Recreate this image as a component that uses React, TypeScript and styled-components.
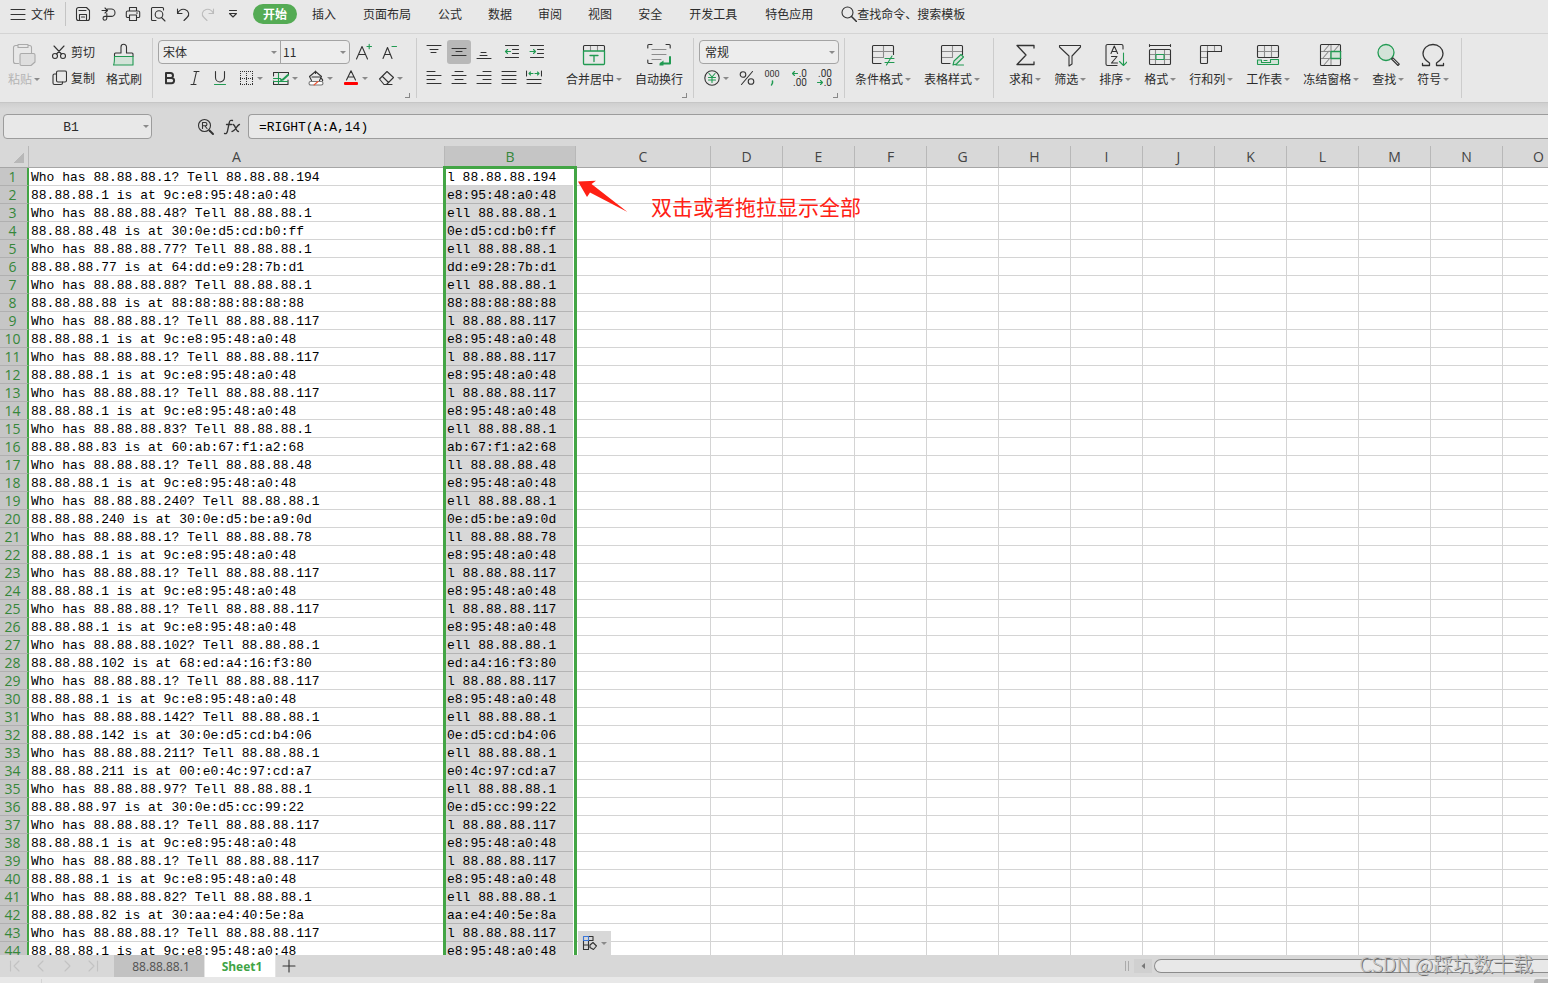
import React from "react";
import styled, { createGlobalStyle, css } from "styled-components";

const ink = "#333333";
const green = "#219a52";
const ui = `"Noto Sans CJK SC", "Noto Sans", sans-serif`;
const latin = `"Open Sans", "Noto Sans", sans-serif`;
const mono = `"Liberation Mono", "Noto Sans CJK SC", monospace`;

const Global = createGlobalStyle`
  * { box-sizing: border-box; }
  body { margin: 0; overflow: hidden; background: #e8e8e8; color: #2c2c2c; font: 12px/18px ${ui}; }
  button, select, input { font: inherit; color: inherit; margin: 0; padding: 0; border: 0; background: none; }
`;

const Page = styled.div`
  display: flex;
  flex-direction: column;
  height: 100vh;
`;

/* ---------- menu bar ---------- */
const MenuBar = styled.nav`
  display: flex;
  align-items: center;
  flex: none;
  height: 34px;
  padding: 0 0 5px 10px;
  border-bottom: 1px solid #d4d4d4;
`;
const FileButton = styled.button`
  display: flex;
  align-items: center;
  gap: 5px;
  height: 24px;
  padding-right: 10px;
  border-right: 1px solid #c4c4c4;
`;
const QuickBar = styled.div`
  display: flex;
  gap: 1px;
  padding: 0 8px 0 5px;
`;
const SquareButton = styled.button<{ $active?: boolean }>`
  display: flex;
  align-items: center;
  justify-content: center;
  width: 24px;
  height: 24px;
  border-radius: 3px;
  ${(p) => p.$active && css`background: #b8b8b8;`}
`;
const Tab = styled.button<{ $active?: boolean; $long?: boolean }>`
  height: 20px;
  padding: 0 ${(p) => (p.$long ? 14 : 13)}px;
  border-radius: 10px;
  white-space: nowrap;
  ${(p) =>
    p.$active &&
    css`
      margin-right: 2px;
      padding: 0 10px;
      background: #54ab54;
      color: #fff;
      font-weight: 700;
    `}
`;
const TabList = styled.div`
  display: flex;
`;
const SearchBox = styled.label`
  display: flex;
  align-items: center;
  flex: 1;
  margin-left: 14px;
  input { flex: 1; min-width: 0; outline: none; }
  input::placeholder { color: #2c2c2c; opacity: 1; }
`;

/* ---------- ribbon ---------- */
const Ribbon = styled.div`
  display: flex;
  flex: none;
  height: 68px;
  padding: 4px 0;
`;
const Group = styled.section<{ $left: number; $right: number; $gap: number }>`
  position: relative;
  display: flex;
  flex: none;
  gap: ${(p) => p.$gap}px;
  padding: 2px ${(p) => p.$right}px 0 ${(p) => p.$left}px;
  border-right: 1px solid #cccccc;
`;
const Corner = styled.button`
  position: absolute;
  right: 6px;
  bottom: 0;
  width: 5px;
  height: 5px;
  border: solid #888;
  border-width: 0 1px 1px 0;
`;
const Stack = styled.div<{ $after?: number }>`
  display: flex;
  flex-direction: column;
  gap: 2px;
  padding-right: ${(p) => p.$after ?? 0}px;
`;
const Row = styled.div<{ $gap?: number }>`
  display: flex;
  align-items: center;
  height: 24px;
  gap: ${(p) => p.$gap ?? 1}px;
`;
const BigButton = styled.button<{ $muted?: boolean }>`
  display: flex;
  flex-direction: column;
  align-items: center;
  gap: 3px;
  padding-top: 3px;
  color: ${(p) => (p.$muted ? "#b4b4b4" : "inherit")};
`;
const Label = styled.span`
  display: flex;
  align-items: center;
  gap: 2px;
  white-space: nowrap;
`;
const LineButton = styled.button`
  display: flex;
  align-items: center;
  gap: 4px;
  height: 24px;
`;
const DropButton = styled.button`
  display: flex;
  align-items: center;
  gap: 3px;
  height: 24px;
  padding: 0 5px;
`;
const Caret = styled.i`
  flex: none;
  width: 0;
  height: 0;
  border: solid transparent;
  border-width: 3px 3px 0;
  border-top-color: #8a8a8a;
`;
const Combo = styled.div<{ $width: number }>`
  display: flex;
  width: ${(p) => p.$width}px;
  height: 24px;
  border: 1px solid #a4a4a4;
  border-radius: 4px;
  background: #ededed;
`;
const Pick = styled.label<{ $width?: number; $inset: number }>`
  display: flex;
  align-items: center;
  ${(p) => (p.$width ? css`width: ${p.$width}px;` : css`flex: 1;`)}
  padding: 0 3px 0 ${(p) => p.$inset}px;
  & + & { border-left: 1px solid #a4a4a4; }
  select { appearance: none; flex: 1; min-width: 0; outline: none; }
`;

/* ---------- formula bar ---------- */
const FormulaBar = styled.div`
  display: flex;
  align-items: center;
  flex: none;
  height: 44px;
  padding: 4px 0 0 3px;
  border-top: 1px solid #c6c6c6;
  background: linear-gradient(#cfcfcf, #d8d8d8 6px);
`;
const NameBox = styled.label`
  display: flex;
  align-items: center;
  width: 149px;
  height: 25px;
  padding-right: 2px;
  border: 1px solid #9c9c9c;
  border-radius: 4px;
  background: #e8e8e8;
  input {
    flex: 1;
    min-width: 0;
    padding: 2px 5px 0 0;
    text-align: center;
    font: 13px/18px ${mono};
    outline: none;
  }
`;
const FormulaTools = styled.div`
  display: flex;
  gap: 2px;
  padding: 0 4px 0 42px;
`;
const FormulaInput = styled.input`
  && {
    flex: 1;
    min-width: 0;
    height: 25px;
    padding: 2px 0 0 10px;
    border: solid #9c9c9c;
    border-width: 1px 0 1px 1px;
    border-radius: 4px 0 0 4px;
    background: #e8e8e8;
    color: #000;
    font: 13px/18px ${mono};
    outline: none;
  }
`;

/* ---------- sheet ---------- */
const Sheet = styled.main`
  position: relative;
  flex: 1;
  min-height: 0;
  overflow: hidden;
  background: #fff;
`;
const Grid = styled.table`
  table-layout: fixed;
  width: 1575px;
  border-collapse: separate;
  border-spacing: 0;
`;
const ColHead = styled.th<{ $on?: boolean }>`
  height: 22px;
  padding: 0 0 1px;
  border-right: 1px solid #b8b8b8;
  border-bottom: 1px solid #a6a6a6;
  background: ${(p) => (p.$on ? "#c5c5c5" : "#d8d8d8")};
  color: ${(p) => (p.$on ? "#36873a" : "#444")};
  font: 14px/19px ${latin};
`;
const SelectAll = styled.th`
  height: 22px;
  padding: 0;
  border-right: 1px solid #b8b8b8;
  border-bottom: 1px solid #a6a6a6;
  background: linear-gradient(135deg, #d8d8d8 50%, #b8b8b8 50%) 13px 6px / 11px 11px no-repeat #d8d8d8;
`;
const RowHead = styled.th`
  height: 18px;
  padding: 0 2px 0 0;
  border-right: 2px solid #43a545;
  border-bottom: 1px solid #b0b0b0;
  background: #c6c6c6;
  color: #36873a;
  font: 14px/17px ${latin};
`;
const Cell = styled.td<{ $fill?: boolean }>`
  height: 18px;
  padding: 3px 0 0 2px;
  border-right: 1px solid #d4d4d4;
  border-bottom: 1px solid ${(p) => (p.$fill ? "#b4b4b4" : "#d4d4d4")};
  ${(p) => p.$fill && css`background: #d8d8d8;`}
  color: #000;
  font: 13px/14px ${mono};
  white-space: pre;
`;
const Selection = styled.div`
  position: absolute;
  top: 20px;
  bottom: 0;
  left: 443px;
  width: 134px;
  border: 3px solid #43a545;
  border-bottom: 0;
  box-shadow: inset -1px 1px 0 #fff;
  pointer-events: none;
`;
const Callout = styled.div`
  position: absolute;
  top: 34px;
  left: 577px;
  display: flex;
  gap: 23px;
  color: #ff2014;
  font-size: 21px;
  line-height: 52px;
  white-space: nowrap;
`;
const FillOptions = styled.button`
  && {
    position: absolute;
    left: 578px;
    bottom: 0;
    display: flex;
    align-items: center;
    gap: 3px;
    width: 33px;
    height: 24px;
    padding-left: 4px;
    background: #d8d8d8;
  }
`;

/* ---------- bottom ---------- */
const SheetBar = styled.footer`
  position: relative;
  display: flex;
  flex: none;
  height: 22px;
  background: #d8d8d8;
`;
const SheetNav = styled.div`
  display: flex;
  align-items: center;
  gap: 10px;
  width: 114px;
  padding-left: 7px;
`;
const NavButton = styled.button`
  display: flex;
  width: 16px;
`;
const SheetTab = styled.button<{ $active?: boolean }>`
  && {
    width: ${(p) => (p.$active ? 71 : 91)}px;
    padding: 2px 0 0 4px;
    border-right: 1px solid #e4e4e4;
    background: ${(p) => (p.$active ? "#fff" : "#c2c2c2")};
    color: ${(p) => (p.$active ? "#3fa446" : "#505050")};
    font: ${(p) => (p.$active ? 700 : 400)} 12px/18px ${latin};
  }
`;
const AddSheet = styled.button`
  && {
    display: flex;
    align-items: center;
    width: 26px;
    padding-left: 6px;
  }
`;
const Scroller = styled.div`
  display: flex;
  align-items: center;
  width: 423px;
  margin-left: auto;
`;
const Splitter = styled.span`
  width: 4px;
  height: 10px;
  margin-right: 5px;
  border: solid #aaa;
  border-width: 0 1px;
`;
const ScrollButton = styled.button`
  && {
    display: flex;
    align-items: center;
    justify-content: center;
    width: 18px;
    height: 14px;
    margin-right: 2px;
    background: #d0d0d0;
  }
`;
const Thumb = styled.div`
  flex: 1;
  height: 14px;
  border: 1px solid #8c8c8c;
  border-right: 0;
  border-radius: 7px 0 0 7px;
  background: #e8e8e8;
`;
const Watermark = styled.span`
  position: absolute;
  right: 15px;
  bottom: 1px;
  color: #c4c4c4;
  font-size: 20px;
  font-weight: 300;
  line-height: 24px;
  white-space: nowrap;
  text-shadow: 1px 1px 0 #6e6e6e;
`;
const StatusBar = styled.div`
  display: flex;
  justify-content: space-between;
  flex: none;
  height: 6px;
  padding: 2px 0 0 41px;
  background: #e8e8e8;
`;
const StatusMark = styled.span<{ $wide?: boolean }>`
  width: ${(p) => (p.$wide ? 14 : 1)}px;
  background: ${(p) => (p.$wide ? "#b4b4b4" : "#d4d4d4")};
  border-radius: ${(p) => (p.$wide ? "3px 0 0 0" : "0")};
`;

/* ---------- icons ---------- */
type IconProps = { size?: number; w?: number; color?: string; children: React.ReactNode };
const Icon = ({ size = 16, w, color = ink, children }: IconProps) => (
  <svg
    width={w ?? size}
    height={size}
    viewBox={`0 0 ${w ?? size} ${size}`}
    fill="none"
    stroke={color}
    strokeWidth="1.1"
    strokeLinecap="round"
    strokeLinejoin="round"
    aria-hidden="true"
  >
    {children}
  </svg>
);

const quick: [string, React.ReactNode][] = [
  ["保存", <Icon key="i"><path d="M1.5 3.5a2 2 0 0 1 2-2h8l3 3v8a2 2 0 0 1-2 2h-9a2 2 0 0 1-2-2zM4.5 14.500v-6h7v6M4 4.500h7M6.500 11h3" /></Icon>],
  ["输出为PDF", <Icon key="i"><path d="M2 4.500h5M5 2l2.500 2.500L5 7M7.500 3h3.800a3.700 3.700 0 0 1 0 7.400H4.800a1.900 1.900 0 1 0 2 1.900V7.500" /></Icon>],
  ["打印", <Icon key="i"><path d="M4.500 5V1.500h7V5M4.500 11.500h-2a1.200 1.200 0 0 1-1.200-1.200V6.500A1.500 1.500 0 0 1 2.800 5h10.400a1.500 1.500 0 0 1 1.500 1.500v3.800a1.200 1.200 0 0 1-1.200 1.200h-2M4.500 9h7v5.500h-7zM11.500 7h1" /></Icon>],
  ["打印预览", <Icon key="i"><path d="M6 14.500H2.500a1 1 0 0 1-1-1v-11a1 1 0 0 1 1-1h10a1 1 0 0 1 1 1V4M11.500 11.500l3.500 3.500" /><circle cx="9" cy="8.500" r="3.800" /></Icon>],
  ["撤消", <Icon key="i"><path d="M2.500 3v4.500H7M2.500 7.500C4 4.500 7 2.800 10 3.500c4 1.200 5 5.500 2 8L9 14.500" /></Icon>],
  ["恢复", <Icon key="i" color="#bcbcbc"><path d="M13.500 3v4.500H9M13.500 7.500C12 4.500 9 2.800 6 3.500c-4 1.200-5 5.500-2 8L7 14.500" /></Icon>],
  ["自定义", <Icon key="i"><path d="M4.500 4.500h7M4.500 7.500h7L8 11z" /></Icon>],
];

const tabs = ["开始", "插入", "页面布局", "公式", "数据", "审阅", "视图", "安全", "开发工具", "特色应用"];

const lines = (rows: [number, number, number][]) => (
  <Icon>
    <path d={rows.map(([x, y, n]) => `M${x} ${y}.500h${n}`).join("")} />
  </Icon>
);
const indent = (left: boolean) => (
  <Icon>
    <path d="M1.500 1.500h13M8.500 5.500h6M8.500 9.500h6M1.500 13.500h13" />
    <path stroke={green} d={left ? "M1.500 7.500h5M3.500 5.500l-2 2 2 2" : "M1 7.500h5M4.500 5.500l2 2-2 2"} />
  </Icon>
);
const grid = (
  <>
    <path stroke="#8c8c8c" d="M1.500 8.500h21M1.500 14.500h11M12.500 2.500v12" />
    <path d="M10 20.500H2.500a1 1 0 0 1-1-1v-16a1 1 0 0 1 1-1h19a1 1 0 0 1 1 1v8" />
  </>
);

type Tool = { label: string; caret?: boolean; icon: React.ReactNode };
const styleTools: Tool[] = [
  { label: "条件格式", caret: true, icon: <Icon size={24}>{grid}<path stroke={green} d="M14 15.500h9M14 19.500h9M21 13l-5.500 9" /></Icon> },
  { label: "表格样式", caret: true, icon: <Icon size={24}>{grid}<path stroke={green} fill="#d3e3d8" d="M13 22l1-4 7-6.500 2.500 2.500-7 7zM16 22h7.500" /></Icon> },
];
const editTools: Tool[] = [
  { label: "求和", caret: true, icon: <Icon size={24}><path strokeWidth="1.300" d="M21 5V2.500H4l9 9.500-9 9.500h17V19" /></Icon> },
  { label: "筛选", caret: true, icon: <Icon size={24}><path d="M1.500 2.500h21v1.500l-8.500 9v8l-3 2v-10L1.500 4z" /></Icon> },
  {
    label: "排序",
    caret: true,
    icon: (
      <Icon size={24}>
        <path d="M11 22.500H4.500a1.500 1.500 0 0 1-1.500-1.500V3a1.500 1.500 0 0 1 1.500-1.500h14A1.500 1.500 0 0 1 20 3v3M11 22.500h3" />
        <path d="M8 10.500l3.300-7.500 3.300 7.500M9 8.500h4.600M8.500 13.500h5.500l-5.500 6.500h6" />
        <path stroke={green} d="M20.500 10v12M16.500 18.500l4 4 4-4" />
      </Icon>
    ),
  },
  {
    label: "格式",
    caret: true,
    icon: (
      <Icon size={24}>
        <path d="M1.500 1.500v2M22.500 1.500v2M1.500 2.500h21" />
        <path stroke="#8c8c8c" d="M1.500 11.500h21M1.500 16.500h21M7.500 6.500v15M16.500 6.500v15" />
        <rect x="1.500" y="6.500" width="21" height="15" rx="1" />
        <rect x="8" y="11.500" width="8" height="5" fill="#e8e8e8" stroke={green} />
      </Icon>
    ),
  },
  { label: "行和列", caret: true, icon: <Icon size={24}><path stroke="#8c8c8c" d="M8.500 2.500v6h-7M15.500 2.500v6M1.500 14.500h7" /><path d="M2.500 2.500h19a1 1 0 0 1 1 1v5h-14v11a1 1 0 0 1-1 1h-5a1 1 0 0 1-1-1v-16a1 1 0 0 1 1-1z" /></Icon> },
  {
    label: "工作表",
    caret: true,
    icon: (
      <Icon size={24}>
        <path stroke="#8c8c8c" d="M1.500 8.500h21M8.500 2.500v12M15.500 2.500v12" />
        <rect x="1.500" y="2.500" width="21" height="12" rx="1" />
        <path stroke={green} fill="#d3e3d8" d="M1.500 17v4a.5.5 0 0 0 .5.500h20a.5.5 0 0 0 .5-.500v-4.500h-8v3h-9v-2.500zM8 17.500h3" />
      </Icon>
    ),
  },
  {
    label: "冻结窗格",
    caret: true,
    icon: (
      <Icon size={24}>
        <path stroke="#8c8c8c" d="M2 8.500h20M2 15.500h20M12 2v20M5 8l5-6M15 8l5-6M4 15l6-7M5 22l6-7" />
        <rect x="1.500" y="1.500" width="20" height="21" rx="1" />
        <rect x="12" y="8.500" width="9.500" height="7" fill="#d3e3d8" stroke={green} strokeWidth="1.300" />
      </Icon>
    ),
  },
  { label: "查找", caret: true, icon: <Icon size={24}><circle cx="10" cy="9.500" r="8" fill="#d3e3d8" stroke={green} strokeWidth="1.300" /><path d="M15.500 16l6.500 6.500 1.300-1.300L17 14.800z" /></Icon> },
  { label: "符号", caret: true, icon: <Icon size={24}><path strokeWidth="1.300" d="M1.500 20.500v2h7V20C4.500 17.500 2 14.500 2 10.500a10 9 0 0 1 20 0c0 4-2.500 7-6.500 9.500v2.500h7v-2" /></Icon> },
];

const Tools = ({ items }: { items: Tool[] }) => (
  <>
    {items.map((t) => (
      <BigButton key={t.label}>
        {t.icon}
        <Label>{t.label}{t.caret && <Caret />}</Label>
      </BigButton>
    ))}
  </>
);

const Decimals = ({ top, bottom, more }: { top: string; bottom: string; more: boolean }) => (
  <Icon w={18} size={18}>
    <g fill={ink} stroke="none" fontFamily="Roboto, sans-serif" fontSize="10" textAnchor="end">
      <text x="16" y="8">{top}</text>
      <text x="16" y="17">{bottom}</text>
    </g>
    <path stroke={green} d={more ? "M1.500 4.500h5M3.500 2.500l-2 2 2 2" : "M1.500 13.500h5M4.500 11.500l2 2-2 2"} />
  </Icon>
);

const cells = [
  "Who has 88.88.88.1? Tell 88.88.88.194", "88.88.88.1 is at 9c:e8:95:48:a0:48",
  "Who has 88.88.88.48? Tell 88.88.88.1", "88.88.88.48 is at 30:0e:d5:cd:b0:ff",
  "Who has 88.88.88.77? Tell 88.88.88.1", "88.88.88.77 is at 64:dd:e9:28:7b:d1",
  "Who has 88.88.88.88? Tell 88.88.88.1", "88.88.88.88 is at 88:88:88:88:88:88",
  "Who has 88.88.88.1? Tell 88.88.88.117", "88.88.88.1 is at 9c:e8:95:48:a0:48",
  "Who has 88.88.88.1? Tell 88.88.88.117", "88.88.88.1 is at 9c:e8:95:48:a0:48",
  "Who has 88.88.88.1? Tell 88.88.88.117", "88.88.88.1 is at 9c:e8:95:48:a0:48",
  "Who has 88.88.88.83? Tell 88.88.88.1", "88.88.88.83 is at 60:ab:67:f1:a2:68",
  "Who has 88.88.88.1? Tell 88.88.88.48", "88.88.88.1 is at 9c:e8:95:48:a0:48",
  "Who has 88.88.88.240? Tell 88.88.88.1", "88.88.88.240 is at 30:0e:d5:be:a9:0d",
  "Who has 88.88.88.1? Tell 88.88.88.78", "88.88.88.1 is at 9c:e8:95:48:a0:48",
  "Who has 88.88.88.1? Tell 88.88.88.117", "88.88.88.1 is at 9c:e8:95:48:a0:48",
  "Who has 88.88.88.1? Tell 88.88.88.117", "88.88.88.1 is at 9c:e8:95:48:a0:48",
  "Who has 88.88.88.102? Tell 88.88.88.1", "88.88.88.102 is at 68:ed:a4:16:f3:80",
  "Who has 88.88.88.1? Tell 88.88.88.117", "88.88.88.1 is at 9c:e8:95:48:a0:48",
  "Who has 88.88.88.142? Tell 88.88.88.1", "88.88.88.142 is at 30:0e:d5:cd:b4:06",
  "Who has 88.88.88.211? Tell 88.88.88.1", "88.88.88.211 is at 00:e0:4c:97:cd:a7",
  "Who has 88.88.88.97? Tell 88.88.88.1", "88.88.88.97 is at 30:0e:d5:cc:99:22",
  "Who has 88.88.88.1? Tell 88.88.88.117", "88.88.88.1 is at 9c:e8:95:48:a0:48",
  "Who has 88.88.88.1? Tell 88.88.88.117", "88.88.88.1 is at 9c:e8:95:48:a0:48",
  "Who has 88.88.88.82? Tell 88.88.88.1", "88.88.88.82 is at 30:aa:e4:40:5e:8a",
  "Who has 88.88.88.1? Tell 88.88.88.117", "88.88.88.1 is at 9c:e8:95:48:a0:48",
];
const columns = "ABCDEFGHIJKLMNO".split("");
const widths = [29, 416, 131, 135, ...Array(12).fill(72)];

export default function App() {
  return (
    <Page>
      <Global />
      <MenuBar>
        <FileButton>
          <Icon><path d="M1 3.500h14M1 8.500h14M1 13.500h14" /></Icon>文件
        </FileButton>
        <QuickBar>
          {quick.map(([name, icon]) => (
            <SquareButton key={name} aria-label={name}>{icon}</SquareButton>
          ))}
        </QuickBar>
        <TabList>
          {tabs.map((t, i) => <Tab key={t} $active={i === 0} $long={t.length > 2}>{t}</Tab>)}
        </TabList>
        <SearchBox>
          <Icon><circle cx="6.500" cy="6.500" r="5.500" /><path strokeWidth="1.500" d="M10.500 10.500l5 5" /></Icon>
          <input placeholder="查找命令、搜索模板" aria-label="查找命令、搜索模板" />
        </SearchBox>
      </MenuBar>

      <Ribbon>
        <Group $left={8} $right={10} $gap={11}>
          <BigButton $muted>
            <Icon size={24} color="#aaa">
              <path d="M6.500 20.500h-3a2 2 0 0 1-2-2v-14a2 2 0 0 1 2-2H6M16 2.500h1.500a2 2 0 0 1 2 2V10M6 4.500v-3h10v3z" />
              <path fill="#dedede" d="M9.500 10.500h12a1.500 1.500 0 0 1 1.500 1.500v7l-4 3.500H9.500A1.500 1.500 0 0 1 8 21v-9a1.500 1.500 0 0 1 1.500-1.500z" />
            </Icon>
            <Label>粘贴<Caret /></Label>
          </BigButton>
          <Stack>
            <LineButton>
              <Icon><circle cx="4" cy="12" r="2.500" /><circle cx="12" cy="12" r="2.500" /><path d="M5.500 10L13 2M10.500 10L3 2" /></Icon>剪切
            </LineButton>
            <LineButton>
              <Icon><rect x="5.500" y="1" width="10" height="11" rx="1.500" /><path d="M5.500 4h-2A1.500 1.500 0 0 0 2 5.500v7.500A1.500 1.500 0 0 0 3.500 14.500h6.500a1.500 1.500 0 0 0 1.500-1.500v-1" /></Icon>复制
            </LineButton>
          </Stack>
          <BigButton>
            <Icon size={24}>
              <path fill="#d3e3d8" stroke="none" d="M3 13h18v9H3z" />
              <path d="M2.500 13.500V11a1 1 0 0 1 1-1H9V4a2.500 2.500 0 0 1 5.500 0v6h5.500a1 1 0 0 1 1 1v2.500" />
              <path stroke={green} d="M2.500 13.500h18.500v8.500H1.500c1-1.500 1-3 1-8.500z" />
            </Icon>
            <Label>格式刷</Label>
          </BigButton>
        </Group>

        <Group $left={5} $right={8} $gap={0}>
          <Stack>
            <Row $gap={2}>
              <Combo $width={192}>
                <Pick $width={121} $inset={4}><select aria-label="字体"><option>宋体</option></select><Caret /></Pick>
                <Pick $inset={2}><select aria-label="字号"><option>11</option></select><Caret /></Pick>
              </Combo>
              <SquareButton aria-label="增大字号">
                <Icon size={18}><path d="M1.500 16L7 3.500 12.500 16M3.500 11.500h7" /><path stroke={green} d="M12 3.500h4.500M14.200 1.200v4.600" /></Icon>
              </SquareButton>
              <SquareButton aria-label="减小字号">
                <Icon size={18}><path d="M2 15.500L6.500 4.500 11 15.500M3.500 11.500h6" /><path stroke={green} d="M11 3.500h4.500" /></Icon>
              </SquareButton>
            </Row>
            <Row>
              <SquareButton aria-label="加粗"><Icon><path strokeWidth="2" d="M4 3h4.500a2.500 2.500 0 0 1 0 5H4zM4 8h5.500a2.600 2.600 0 0 1 0 5.200H4z" /></Icon></SquareButton>
              <SquareButton aria-label="倾斜"><Icon><path d="M7 1.500h5M4 14.500h5M9.500 1.500l-3 13" /></Icon></SquareButton>
              <SquareButton aria-label="下划线"><Icon><path d="M3.500 1.500v6a4.500 4.500 0 0 0 9 0v-6" /><path stroke={green} d="M2.500 14.500h11" /></Icon></SquareButton>
              <Row $gap={0}>
                <DropButton aria-label="边框">
                  <Icon><path strokeWidth="1" strokeLinecap="butt" strokeDasharray="1 1" d="M2 1.500h13M2 8.500h13M2 14.500h13M2.500 1v14M8.500 1v14M14.500 1v14" /></Icon>
                  <Caret />
                </DropButton>
                <DropButton aria-label="绘制边框">
                  <Icon>
                    <path d="M15.500 4.500v-2h-15V6M.5 11v3.500h14.500V10" />
                    <path stroke={green} d="M.5 8.500h7M.5 11.500h14M5.500 3v11" />
                    <path stroke={green} strokeWidth="2" d="M15 5l-5 4.500-2 .5" />
                  </Icon>
                  <Caret />
                </DropButton>
                <DropButton aria-label="填充颜色">
                  <Icon>
                    <path d="M3.500 10.500L1.500 6.500l6-5 6 5-2 4M4 7h8M7.500 3.500V1M12.500 8c2 1 2.500 2 2 3" />
                    <rect x="1" y="11.500" width="14" height="3.500" rx="1.700" fill="#fff" stroke="#777" />
                    <path stroke="#e53" d="M6 15l4-3.500" />
                  </Icon>
                  <Caret />
                </DropButton>
                <DropButton aria-label="字体颜色"><Icon><path d="M3.500 10L8 .8 12.500 10M5 7h6" /><rect x="1" y="12" width="14" height="3" rx="1" fill="#f00" stroke="none" /></Icon><Caret /></DropButton>
                <DropButton aria-label="清除"><Icon><path d="M1.500 9L9 1.500 15.500 7.500 8.500 14.500H6zM4.500 6.500l6 6M6 14.500h8" /></Icon><Caret /></DropButton>
              </Row>
            </Row>
          </Stack>
          <Corner aria-label="字体设置" />
        </Group>

        <Group $left={5} $right={10} $gap={13}>
          <Stack $after={4}>
            <Row $gap={4}>
              <Row>
                <SquareButton aria-label="顶端对齐">{lines([[1, 1, 14], [4, 5, 8], [5, 8, 5]])}</SquareButton>
                <SquareButton aria-label="垂直居中" $active>{lines([[1, 4, 14], [5, 7, 6], [1, 11, 14]])}</SquareButton>
                <SquareButton aria-label="底端对齐">{lines([[5, 8, 5], [4, 11, 7], [1, 14, 14]])}</SquareButton>
              </Row>
              <Row>
                <SquareButton aria-label="减少缩进">{indent(true)}</SquareButton>
                <SquareButton aria-label="增加缩进">{indent(false)}</SquareButton>
              </Row>
            </Row>
            <Row>
              <SquareButton aria-label="左对齐">{lines([[1, 1, 8], [1, 5, 14], [1, 9, 8], [1, 13, 14]])}</SquareButton>
              <SquareButton aria-label="水平居中">{lines([[4, 1, 8], [1, 5, 14], [4, 9, 8], [1, 13, 14]])}</SquareButton>
              <SquareButton aria-label="右对齐">{lines([[7, 1, 8], [1, 5, 14], [7, 9, 8], [1, 13, 14]])}</SquareButton>
              <SquareButton aria-label="两端对齐">{lines([[1, 1, 14], [1, 5, 14], [1, 9, 14], [1, 13, 14]])}</SquareButton>
              <SquareButton aria-label="分散对齐">
                <Icon><path d="M.5 1v5M15.500 1v5M1 9.500h14M1 13.500h14" /><path stroke={green} d="M3 3.500h4M4.500 2L3 3.500 4.500 5M9 3.500h4M11.500 2L13 3.500 11.500 5" /></Icon>
              </SquareButton>
            </Row>
          </Stack>
          <Tools
            items={[
              {
                label: "合并居中",
                caret: true,
                icon: (
                  <Icon size={24}>
                    <path stroke="#8c8c8c" d="M8.500 2.500v5M15.500 2.500v5" />
                    <path d="M1.500 7.500v-4a1 1 0 0 1 1-1h19a1 1 0 0 1 1 1v4" />
                    <path stroke={green} strokeWidth="1.300" d="M1.500 8h21v12.500a1 1 0 0 1-1 1h-19a1 1 0 0 1-1-1zM8 12.500h8M12 12.500v6" />
                  </Icon>
                ),
              },
              {
                label: "自动换行",
                icon: (
                  <Icon size={24}>
                    <path d="M.8 5V2.500a1 1 0 0 1 1-1H5M19 1.500h3.200a1 1 0 0 1 1 1V5M.8 17v2.500a1 1 0 0 0 1 1H5" />
                    <path stroke="#8c8c8c" d="M5 6.500h14M5 11.500h14M5 16.500h9" />
                    <path stroke={green} strokeWidth="2" d="M23 14v6.500h-9" />
                    <path fill={green} stroke="none" d="M12.500 20.500l4-3v5h-4z" />
                  </Icon>
                ),
              },
            ]}
          />
          <Corner aria-label="对齐设置" />
        </Group>

        <Group $left={5} $right={5} $gap={0}>
          <Stack>
            <Combo $width={140}>
              <Pick $inset={5}><select aria-label="数字格式"><option>常规</option></select><Caret /></Pick>
            </Combo>
            <Row $gap={4}>
              <Row>
                <DropButton aria-label="货币"><Icon><circle cx="8" cy="8" r="7.200" /><path stroke={green} d="M5 3.500l3 3.500 3-3.500M8 7v5.500M4.500 7.500h7M4.500 10h7" /></Icon><Caret /></DropButton>
                <SquareButton aria-label="百分比"><Icon><circle cx="4" cy="4.500" r="2.800" /><circle cx="12" cy="11.500" r="2.800" /><path d="M13.500 1.500l-11 13" /></Icon></SquareButton>
                <SquareButton aria-label="千位分隔">
                  <Icon w={18} size={18}>
                    <text x="9" y="8" fill={ink} stroke="none" fontFamily="Roboto, sans-serif" fontSize="9" textAnchor="middle">000</text>
                    <path stroke={green} strokeWidth="1.500" d="M9.500 12v2l-1 2" />
                  </Icon>
                </SquareButton>
              </Row>
              <Row>
                <SquareButton aria-label="增加小数位"><Decimals top=".0" bottom=".00" more /></SquareButton>
                <SquareButton aria-label="减少小数位"><Decimals top=".00" bottom=".0" more={false} /></SquareButton>
              </Row>
            </Row>
          </Stack>
          <Corner aria-label="数字设置" />
        </Group>

        <Group $left={10} $right={13} $gap={13}><Tools items={styleTools} /></Group>
        <Group $left={15} $right={12} $gap={13}><Tools items={editTools} /></Group>
      </Ribbon>

      <FormulaBar>
        <NameBox><input aria-label="名称框" defaultValue="B1" /><Caret /></NameBox>
        <FormulaTools>
          <SquareButton aria-label="浏览公式">
            <Icon size={18}><circle cx="7.500" cy="7.500" r="6" /><path d="M5.500 10.500v-6h2.800a1.600 1.600 0 0 1 0 3.300H5.500M8 8l2 2.500" /><path strokeWidth="2" d="M12.500 12.500l3.500 3.500" /></Icon>
          </SquareButton>
          <SquareButton aria-label="插入函数">
            <Icon size={18}><path strokeWidth="1.300" d="M1.500 15.500c1.800.5 2.500-.5 3-2.500l1.800-8.500C6.700 2.500 7.700 2 9.500 2.500M3.500 6.500h5M10 6.500c2.500 0 2.500 7 5.500 7M16.500 6.500c-2 0-4.500 7-7.500 7" /></Icon>
          </SquareButton>
        </FormulaTools>
        <FormulaInput aria-label="公式" defaultValue="=RIGHT(A:A,14)" />
      </FormulaBar>

      <Sheet>
        <Grid>
          <colgroup>{widths.map((w, i) => <col key={i} width={w} />)}</colgroup>
          <thead>
            <tr>
              <SelectAll aria-label="全选" />
              {columns.map((c) => <ColHead key={c} $on={c === "B"}>{c}</ColHead>)}
            </tr>
          </thead>
          <tbody>
            {cells.map((text, r) => (
              <tr key={r}>
                <RowHead>{r + 1}</RowHead>
                {columns.map((c) => (
                  <Cell key={c} $fill={c === "B" && r > 0}>
                    {c === "A" ? text : c === "B" ? text.slice(-14) : null}
                  </Cell>
                ))}
              </tr>
            ))}
          </tbody>
        </Grid>
        <Selection />
        <Callout>
          <svg width="51" height="34" viewBox="0 0 51 34" fill="#ff2014" aria-hidden="true">
            <path d="M1 1.500L19 .8 14.500 4 50.500 32 13 12.500 10 17z" />
          </svg>
          双击或者拖拉显示全部
        </Callout>
        <FillOptions aria-label="自动填充选项">
          <Icon>
            <path d="M1.500 5.500v9h5v-9M1.500 10h5M6.500 5.500h4.500v-4H6.500M8 10l3-2.500 3.500 3.500-3 3.500L8 12.500z" />
            <path stroke="#3b76d8" d="M1.500 1.500h5v4h-5z" />
          </Icon>
          <Caret />
        </FillOptions>
      </Sheet>

      <SheetBar>
        <SheetNav>
          {["M3.500 3v10M12 3L7 8l5 5", "M10 3L5 8l5 5", "M6 3l5 5-5 5", "M4 3l5 5-5 5M12.500 3v10"].map((d, i) => (
            <NavButton key={d} aria-label={["首个", "上一个", "下一个", "末个"][i]}>
              <Icon color="#c2c2c2"><path d={d} /></Icon>
            </NavButton>
          ))}
        </SheetNav>
        <SheetTab>88.88.88.1</SheetTab>
        <SheetTab $active>Sheet1</SheetTab>
        <AddSheet aria-label="新建工作表"><Icon size={14}><path d="M7 1v12M1 7h12" /></Icon></AddSheet>
        <Scroller>
          <Splitter />
          <ScrollButton aria-label="向左滚动"><Icon size={8} color="none"><path fill="#777" d="M6 1v6L2.500 4z" /></Icon></ScrollButton>
          <Thumb />
        </Scroller>
        <Watermark>CSDN @踩坑数十载</Watermark>
      </SheetBar>
      <StatusBar><StatusMark /><StatusMark $wide /></StatusBar>
    </Page>
  );
}
